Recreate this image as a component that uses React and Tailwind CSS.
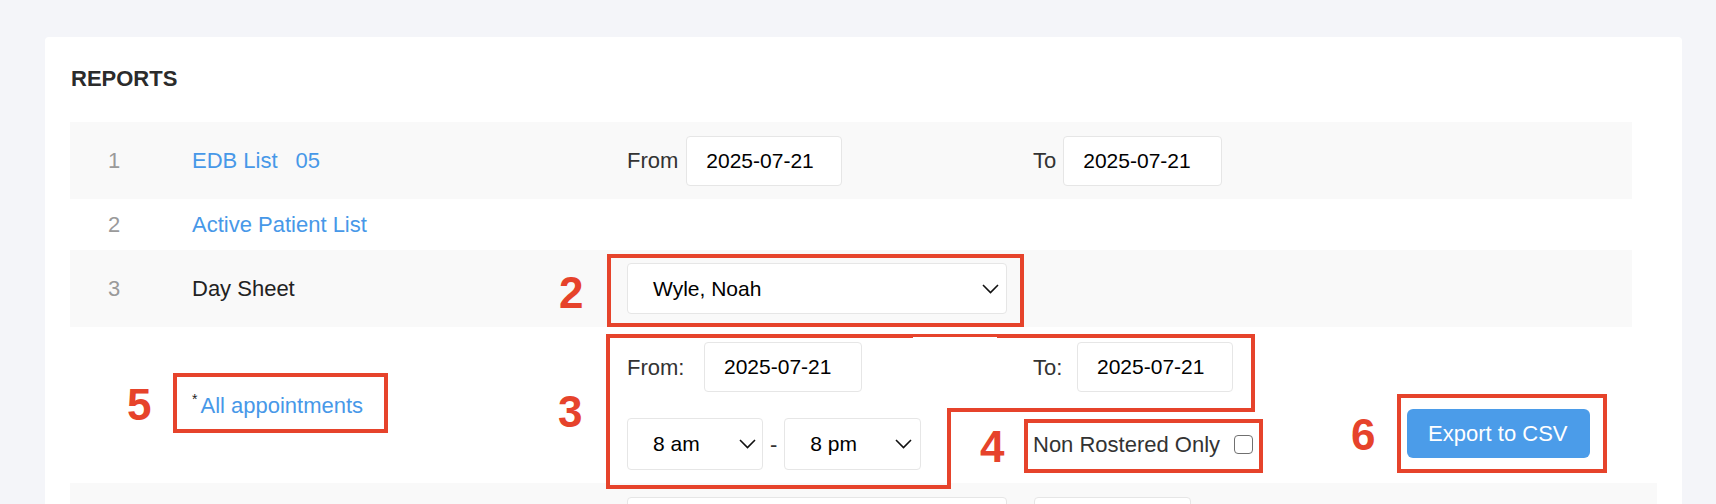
import React from 'react';

const Chevron = () => (
  <svg width="17" height="10" viewBox="0 0 17 10" fill="none">
    <polyline points="1,1 8.5,8.5 16,1" stroke="#111" strokeWidth="1.6" />
  </svg>
);

function DateBox({ className, value }) {
  return (
    <div className={`h-[50px] bg-white border border-[#e6e6e6] rounded-[4px] flex items-center pl-[19px] text-[21px] text-black ${className}`}>
      {value}
    </div>
  );
}

function SelectBox({ className, value }) {
  return (
    <div className={`h-[51px] bg-white border border-[#e6e6e6] rounded-[4px] flex items-center justify-between pl-[25px] text-[21px] text-black ${className}`}>
      <span>{value}</span>
      <Chevron />
    </div>
  );
}

function Num({ n }) {
  return <div className="w-[122px] shrink-0 pl-[38px] text-[22px] text-[#9a9a9a]">{n}</div>;
}

export default function App() {
  return (
    <div className="relative min-h-screen bg-[#f4f5f9] pt-[37px] pl-[45px] overflow-hidden font-['Liberation_Sans',Arial,sans-serif]">
      <div className="w-[1637px] h-[520px] bg-white rounded-t-[4px] pt-[31px] pl-[25px]">
        <h2 className="pl-[1px] text-[22px] leading-[22px] font-bold text-[#2b2b2b]">REPORTS</h2>

        <div className="mt-[32px]">
          {/* 1 */}
          <div className="w-[1562px] h-[77px] bg-[#f9f9f9] flex items-center">
            <Num n="1" />
            <div className="w-[435px] shrink-0 text-[22px] text-[#4798e8]">
              EDB List<span className="ml-[18px]">05</span>
            </div>
            <div className="w-[406px] shrink-0 flex items-center">
              <span className="text-[22px] text-[#333] mr-[8px]">From</span>
              <DateBox className="w-[156px]" value="2025-07-21" />
            </div>
            <div className="flex items-center">
              <span className="text-[22px] text-[#333] mr-[7px]">To</span>
              <DateBox className="w-[159px]" value="2025-07-21" />
            </div>
          </div>

          {/* 2 */}
          <div className="w-[1562px] h-[51px] flex items-center">
            <Num n="2" />
            <div className="text-[22px] text-[#4798e8]">Active Patient List</div>
          </div>

          {/* 3 */}
          <div className="w-[1562px] h-[77px] bg-[#f9f9f9] flex items-center">
            <Num n="3" />
            <div className="w-[435px] shrink-0 text-[22px] text-[#222]">Day Sheet</div>
            <SelectBox className="w-[380px] pr-[7px]" value="Wyle, Noah" />
          </div>

          {/* day sheet options */}
          <div className="w-[1562px] h-[156px] flex">
            <div className="w-[122px] shrink-0" />
            <div className="w-[435px] shrink-0 flex items-center">
              <span className="text-[14px] text-[#222] self-start mt-[62px]">*</span>
              <span className="ml-[3px] text-[22px] text-[#4798e8]">All appointments</span>
            </div>
            <div className="flex flex-col pt-[15px]">
              <div className="h-[50px] flex items-center">
                <div className="w-[406px] flex items-center">
                  <span className="w-[77px] text-[22px] text-[#333]">From:</span>
                  <DateBox className="w-[158px]" value="2025-07-21" />
                </div>
                <span className="w-[44px] text-[22px] text-[#333]">To:</span>
                <DateBox className="w-[156px]" value="2025-07-21" />
              </div>
              <div className="h-[52px] mt-[26px] flex items-center">
                <div className="w-[406px] flex items-center">
                  <SelectBox className="w-[136px] h-[52px] pr-[6px]" value="8 am" />
                  <span className="mx-[7px] text-[22px] text-[#333]">-</span>
                  <SelectBox className="w-[137px] h-[52px] pr-[8px]" value="8 pm" />
                </div>
                <span className="text-[22px] text-[#333]">Non Rostered Only</span>
                <div className="ml-[14px] w-[19px] h-[19px] border-[1.5px] border-[#707070] rounded-[4px] bg-white" />
                <button className="ml-[154px] mb-[21px] w-[183px] h-[49px] rounded-[6px] bg-[#4b9ce9] text-white text-[22px] text-left pl-[21px]">
                  Export to CSV
                </button>
              </div>
            </div>
          </div>

          {/* next row (cut off) */}
          <div className="w-[1587px] h-[80px] bg-[#f9f9f9] flex pt-[14px]">
            <div className="w-[557px] shrink-0" />
            <div className="w-[380px] h-[50px] bg-white border border-[#e6e6e6] rounded-[4px]" />
            <div className="ml-[27px] w-[157px] h-[50px] bg-white border border-[#e6e6e6] rounded-[4px]" />
          </div>
        </div>
      </div>

      {/* annotation overlay */}
      <svg className="absolute left-0 top-0 pointer-events-none" width="1716" height="504" fill="none">
        <rect x="609" y="256" width="413" height="69" stroke="#e6432b" strokeWidth="4" />
        <path d="M608 336 H1253 V410 H949 V487 H608 Z" stroke="#e6432b" strokeWidth="4" />
        <rect x="913" y="337" width="84" height="4" fill="#ffffff" />
        <rect x="1026" y="421" width="235" height="50" stroke="#e6432b" strokeWidth="4" />
        <rect x="175" y="375" width="211" height="56" stroke="#e6432b" strokeWidth="4" />
        <rect x="1399" y="396" width="206" height="75" stroke="#e6432b" strokeWidth="4" />
      </svg>
      <div className="absolute left-[559px] top-[271px] text-[44px] leading-[44px] font-bold text-[#e6432b]">2</div>
      <div className="absolute left-[558px] top-[390px] text-[44px] leading-[44px] font-bold text-[#e6432b]">3</div>
      <div className="absolute left-[980px] top-[425px] text-[44px] leading-[44px] font-bold text-[#e6432b]">4</div>
      <div className="absolute left-[127px] top-[383px] text-[44px] leading-[44px] font-bold text-[#e6432b]">5</div>
      <div className="absolute left-[1351px] top-[413px] text-[44px] leading-[44px] font-bold text-[#e6432b]">6</div>
    </div>
  );
}
